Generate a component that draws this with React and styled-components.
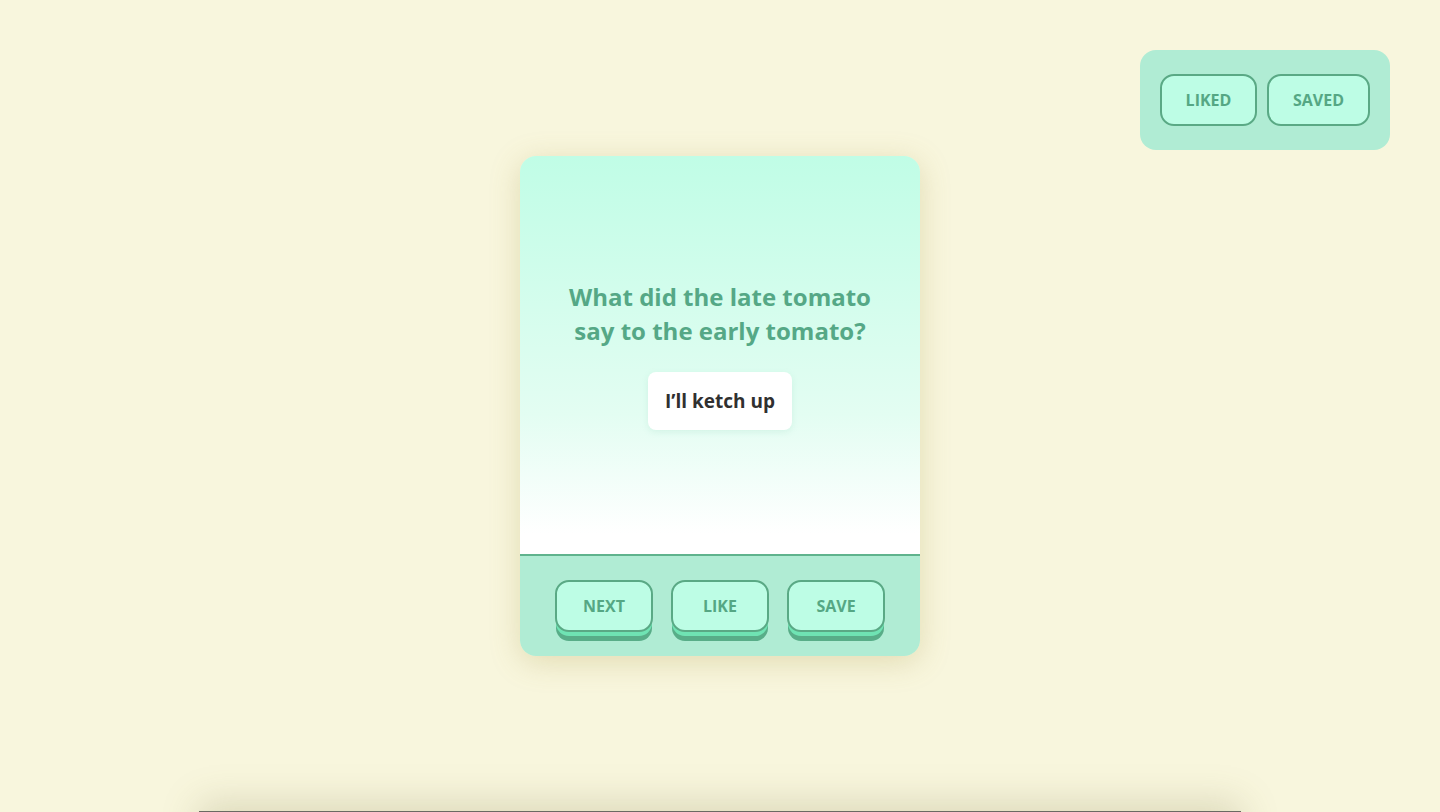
import React from "react";
import styled, { createGlobalStyle } from "styled-components";

const Global = createGlobalStyle`
  html, body { margin: 0; padding: 0; }
  body {
    background: #f8f6dd;
    font-family: "Open Sans", "Noto Sans", sans-serif;
    overflow: hidden;
  }
`;

const Page = styled.main`
  position: relative;
  height: 812px;
  display: flex;
  align-items: center;
  justify-content: center;
`;

const Collections = styled.nav`
  position: absolute;
  top: 50px;
  right: 50px;
  display: flex;
  gap: 10px;
  padding: 24px 20px;
  background: #b0ecd4;
  border-radius: 16px;
`;

const PillButton = styled.button`
  width: ${(p) => p.$w}px;
  height: 52px;
  padding: 0;
  background: #bdfde5;
  border: 2px solid #5aa985;
  border-radius: 14px;
  color: #55a784;
  font-family: "Open Sans", sans-serif;
  font-weight: 700;
  font-size: 16px;
  text-transform: uppercase;
  cursor: pointer;
`;

const Card = styled.section`
  width: 400px;
  height: 500px;
  border-radius: 16px;
  overflow: hidden;
  display: flex;
  flex-direction: column;
  box-shadow: 0 6px 30px rgba(170, 150, 70, 0.28);
`;

const Body = styled.div`
  flex: 1;
  display: flex;
  flex-direction: column;
  align-items: center;
  justify-content: center;
  gap: 24px;
  padding: 0 40px;
  background: linear-gradient(180deg, #c0fde6 0%, #e3fdf2 65%, #ffffff 95%);
  border-bottom: 2px solid #5fb38d;
`;

const Question = styled.h2`
  margin: 0;
  max-width: 320px;
  text-align: center;
  color: #55a886;
  font-size: 24px;
  line-height: 34px;
  font-weight: 700;
`;

const Answer = styled.div`
  padding: 0 17px;
  height: 58px;
  display: flex;
  align-items: center;
  background: #ffffff;
  border-radius: 8px;
  box-shadow: 0 2px 6px rgba(120, 200, 170, 0.18);
  color: #303030;
  font-size: 19px;
  font-weight: 700;
`;

const Footer = styled.div`
  height: 100px;
  flex-shrink: 0;
  background: #b0ecd4;
  display: flex;
  align-items: flex-start;
  justify-content: center;
  gap: 18px;
  padding-top: 24px;
  box-sizing: border-box;
`;

const ActionButton = styled.button`
  width: 98px;
  height: 52px;
  padding: 0;
  background: #bdfde5;
  border: 2px solid #5aa985;
  border-radius: 14px;
  color: #55a784;
  font-family: "Open Sans", sans-serif;
  font-weight: 700;
  font-size: 16px;
  text-transform: uppercase;
  box-shadow: 0 5px 0 -1px #6fe3b3, 0 10px 0 -1px #58ad88;
  cursor: pointer;
`;

const Drawer = styled.div`
  position: fixed;
  left: 199px;
  width: 1042px;
  top: 811px;
  height: 300px;
  background: #fbfbf6;
  border-top: 1px solid #6a6a62;
  box-shadow: 0 -8px 36px rgba(120, 110, 60, 0.22);
`;

export default function App() {
  return (
    <>
      <Global />
      <Page>
        <Collections>
          <PillButton $w={97}>Liked</PillButton>
          <PillButton $w={103}>Saved</PillButton>
        </Collections>
        <Card>
          <Body>
            <Question>What did the late tomato say to the early tomato?</Question>
            <Answer>I’ll ketch up</Answer>
          </Body>
          <Footer>
            <ActionButton>Next</ActionButton>
            <ActionButton>Like</ActionButton>
            <ActionButton>Save</ActionButton>
          </Footer>
        </Card>
        <Drawer />
      </Page>
    </>
  );
}
